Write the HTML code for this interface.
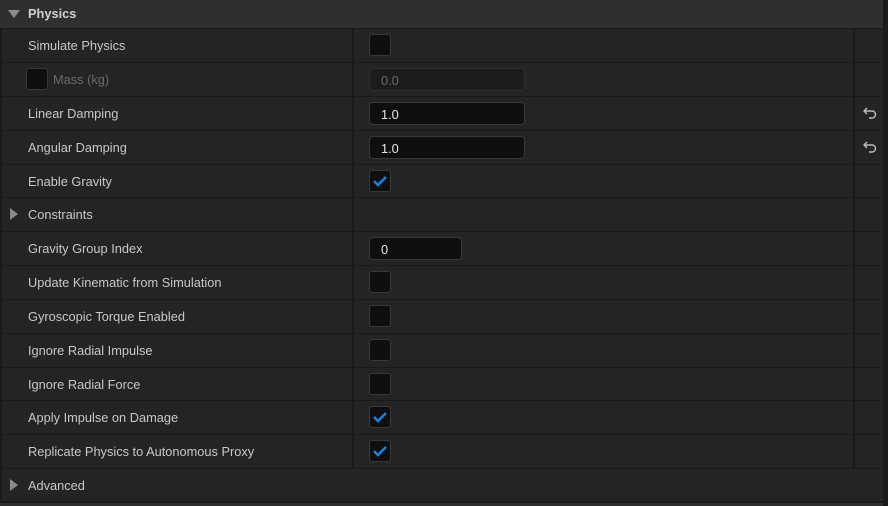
<!DOCTYPE html>
<html><head><style>
*{margin:0;padding:0;box-sizing:border-box}
body{width:888px;height:506px;background:#1a1a1a;font-family:"Liberation Sans",sans-serif;font-size:12.8px;color:#c8c8c8;position:relative;overflow:hidden}
.hdr{position:absolute;left:0;top:0;width:883px;height:28px;background:#2f2f2f}
.hdr span{position:absolute;left:28px;top:6px;font-weight:bold;color:#d0d0d0}
.row{position:absolute;left:2px;width:881px;height:33px;background:#242424}
.lbl{position:absolute;left:26px;top:9px;white-space:nowrap}
.div1{position:absolute;left:350px;top:0;width:2px;height:100%;background:#1a1a1a}
.div2{position:absolute;left:851px;top:0;width:2px;height:100%;background:#1a1a1a}
.cb{position:absolute;left:367px;top:5px;width:22px;height:22px;border-radius:3px;background:#0f0f0f;border:1px solid #383838}
.in{position:absolute;left:367px;top:5px;width:156px;height:23px;border-radius:4px;background:#0f0f0f;border:1px solid #383838;color:#e8e8e8;padding:4px 0 0 11px}
.tri{position:absolute;left:8px;top:10px;width:0;height:0;border-top:6px solid transparent;border-bottom:6px solid transparent;border-left:8px solid #8a8a8a}
.rev{position:absolute;left:860px;top:9px}
</style></head><body>
<div class="hdr"><div style="position:absolute;left:8px;top:10px;border-left:6px solid transparent;border-right:6px solid transparent;border-top:8px solid #8a8a8a"></div><span>Physics</span></div>

<div class="row" style="top:29px"><span class="lbl">Simulate Physics</span><div class="div1"></div><div class="cb"></div><div class="div2"></div></div>
<div class="row" style="top:63px"><div class="cb" style="left:24px;top:5px"></div><span class="lbl" style="left:51px;color:#6a6a6a">Mass (kg)</span><div class="div1"></div><div class="in" style="background:#1c1c1c;border-color:#2e2e2e;color:#6a6a6a">0.0</div><div class="div2"></div></div>
<div class="row" style="top:97px"><span class="lbl">Linear Damping</span><div class="div1"></div><div class="in">1.0</div><div class="div2"></div><svg class="rev" width="16" height="14" viewBox="0 0 16 14"><path d="M5 2L2 5L5 8M2 5H10a3.5 3.5 0 0 1 0 7H7" fill="none" stroke="#bbb" stroke-width="1.4"/></svg></div>
<div class="row" style="top:131px"><span class="lbl">Angular Damping</span><div class="div1"></div><div class="in">1.0</div><div class="div2"></div><svg class="rev" width="16" height="14" viewBox="0 0 16 14"><path d="M5 2L2 5L5 8M2 5H10a3.5 3.5 0 0 1 0 7H7" fill="none" stroke="#bbb" stroke-width="1.4"/></svg></div>
<div class="row" style="top:165px;height:32px"><span class="lbl">Enable Gravity</span><div class="div1"></div><div class="cb"><svg width="20" height="20" viewBox="0 0 20 20"><path d="M4 10L8 14L16 6" fill="none" stroke="#1a7fe0" stroke-width="2.6"/></svg></div><div class="div2"></div></div>
<div class="row" style="top:198px"><div class="tri"></div><span class="lbl">Constraints</span><div class="div1"></div><div class="div2"></div></div>
<div class="row" style="top:232px"><span class="lbl">Gravity Group Index</span><div class="div1"></div><div class="in" style="width:93px">0</div><div class="div2"></div></div>
<div class="row" style="top:266px"><span class="lbl">Update Kinematic from Simulation</span><div class="div1"></div><div class="cb"></div><div class="div2"></div></div>
<div class="row" style="top:300px"><span class="lbl">Gyroscopic Torque Enabled</span><div class="div1"></div><div class="cb"></div><div class="div2"></div></div>
<div class="row" style="top:334px"><span class="lbl">Ignore Radial Impulse</span><div class="div1"></div><div class="cb"></div><div class="div2"></div></div>
<div class="row" style="top:368px;height:32px"><span class="lbl">Ignore Radial Force</span><div class="div1"></div><div class="cb"></div><div class="div2"></div></div>
<div class="row" style="top:401px"><span class="lbl">Apply Impulse on Damage</span><div class="div1"></div><div class="cb"><svg width="20" height="20" viewBox="0 0 20 20"><path d="M4 10L8 14L16 6" fill="none" stroke="#1a7fe0" stroke-width="2.6"/></svg></div><div class="div2"></div></div>
<div class="row" style="top:435px"><span class="lbl">Replicate Physics to Autonomous Proxy</span><div class="div1"></div><div class="cb"><svg width="20" height="20" viewBox="0 0 20 20"><path d="M4 10L8 14L16 6" fill="none" stroke="#1a7fe0" stroke-width="2.6"/></svg></div><div class="div2"></div></div>
<div class="row" style="top:469px;height:32px"><div class="tri"></div><span class="lbl">Advanced</span></div>
<div style="position:absolute;left:0;top:503px;width:883px;height:3px;background:#2f2f2f"></div>
</body></html>
